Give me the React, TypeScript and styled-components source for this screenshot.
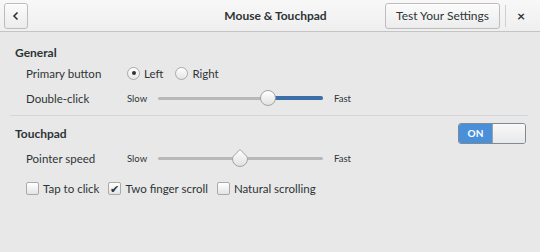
import React from 'react'
import styled, { createGlobalStyle } from 'styled-components'

const GlobalStyle = createGlobalStyle`
  html, body {
    margin: 0;
    padding: 0;
    background: #e8e8e8;
  }
  body {
    font-family: Lato, 'Open Sans', sans-serif;
    color: #2e3436;
  }
`

const Window = styled.div`
  width: 540px;
  height: 252px;
  background: #e8e8e8;
  overflow: hidden;
`

const HeaderBar = styled.div`
  height: 32px;
  display: flex;
  align-items: center;
  padding: 0 4px;
  background: linear-gradient(#f8f8f8, #efefef);
  border-bottom: 1px solid #c4c4c4;
  box-sizing: border-box;
`

const HeaderButton = styled.button`
  height: 26px;
  border: 1px solid #bdbdbd;
  border-radius: 3px;
  background: linear-gradient(#fbfbfb, #ececec);
  font-family: inherit;
  font-size: 12px;
  color: #2e3436;
  padding: 0 10px;
  display: flex;
  align-items: center;
  justify-content: center;
  box-shadow: inset 0 1px #fff;
`

const BackButton = styled(HeaderButton)`
  width: 24px;
  padding: 0;
`

const Title = styled.div`
  flex: 1;
  text-align: center;
  font-weight: 700;
  font-size: 12px;
  padding-left: 138px;
`

const Divider = styled.div`
  width: 1px;
  height: 22px;
  background: #d0d0d0;
  margin-left: 5px;
`

const CloseButton = styled.div`
  width: 30px;
  text-align: center;
  font-size: 14px;
  font-weight: 700;
`

const Body = styled.div`
  padding: 10px 12px 0 15px;
`

const Section = styled.div`
  display: flex;
  flex-direction: column;
`

const SectionHead = styled.div`
  display: flex;
  align-items: center;
  justify-content: space-between;
  height: 20px;
  font-weight: 700;
  font-size: 12px;
`

const Row = styled.div<{ $h: number }>`
  display: flex;
  align-items: center;
  height: ${p => p.$h}px;
  padding-left: 11px;
  font-size: 11.5px;
`

const Label = styled.div`
  width: 101px;
`

const Radio = styled.span<{ $on?: boolean }>`
  width: 11px;
  height: 11px;
  border-radius: 50%;
  border: 1px solid #a9a9a9;
  background: linear-gradient(#ffffff, #e4e4e4);
  display: inline-flex;
  align-items: center;
  justify-content: center;
  margin-right: 4px;
  &::after {
    content: '';
    width: 4px;
    height: 4px;
    border-radius: 50%;
    background: ${p => (p.$on ? '#2e3436' : 'transparent')};
  }
`

const Option = styled.label<{ $gap?: number }>`
  display: flex;
  align-items: center;
  margin-right: ${p => p.$gap ?? 0}px;
`

const SmallText = styled.span<{ $w: number }>`
  font-size: 9.5px;
  width: ${p => p.$w}px;
`

const Track = styled.div`
  position: relative;
  width: 165px;
  height: 3px;
  border-radius: 2px;
  background: #b8b8b8;
  margin-right: 11px;
`

const Fill = styled.div`
  position: absolute;
  top: -0.5px;
  right: 0;
  height: 4px;
  border-radius: 2px;
  background: #3c6fa7;
`

const Knob = styled.div`
  position: absolute;
  top: 50%;
  width: 14px;
  height: 14px;
  margin: -8px 0 0 -8px;
  border-radius: 50%;
  border: 1px solid #a4a4a4;
  background: linear-gradient(#ffffff, #e2e2e2);
`

const MarkKnob = styled.svg`
  position: absolute;
  top: 50%;
  margin: -10px 0 0 -9px;
`

const Separator = styled.div`
  height: 1px;
  background: #d6d6d6;
  margin: 3px 0 7px -5px;
`

const Switch = styled.div`
  display: flex;
  width: 66px;
  height: 19px;
  border: 1px solid #7f8a93;
  border-radius: 3px;
  overflow: hidden;
  margin-right: 2px;
`

const SwitchOn = styled.div`
  width: 33px;
  background: #4a90d9;
  color: #fff;
  font-size: 10px;
  font-weight: 700;
  display: flex;
  align-items: center;
  justify-content: center;
`

const SwitchOff = styled.div`
  flex: 1;
  border-left: 1px solid #9aa3aa;
  background: linear-gradient(#f9f9f9, #e8e8e8);
`

const Check = styled.span`
  width: 11px;
  height: 11px;
  border: 1px solid #a9a9a9;
  border-radius: 2px;
  background: linear-gradient(#ffffff, #e4e4e4);
  display: inline-flex;
  align-items: center;
  justify-content: center;
  margin-right: 4px;
  font-size: 11px;
  line-height: 1;
  color: #2e3436;
`

function Slider({ pos, fill, marked }: { pos: number; fill?: boolean; marked?: boolean }) {
  return (
    <Track>
      {fill && <Fill style={{ left: pos }} />}
      {marked ? (
        <MarkKnob width="18" height="20" viewBox="0 0 18 20" style={{ left: pos }}>
          <defs>
            <linearGradient id="kg" x1="0" y1="0" x2="0" y2="1">
              <stop offset="0" stopColor="#ffffff" />
              <stop offset="1" stopColor="#e0e0e0" />
            </linearGradient>
          </defs>
          <path d="M9 1.5 L15.5 8 Q16.5 9 16.5 11 A7.5 7.5 0 0 1 1.5 11 Q1.5 9 2.5 8 Z" fill="url(#kg)" stroke="#a4a4a4" strokeWidth="1" />
        </MarkKnob>
      ) : (
        <Knob style={{ left: pos }} />
      )}
    </Track>
  )
}

export default function App() {
  return (
    <Window>
      <GlobalStyle />
      <HeaderBar>
        <BackButton>
          <svg width="10" height="10" viewBox="0 0 10 10">
            <path d="M6.5 1.5 L3 5 L6.5 8.5" fill="none" stroke="#2e3436" strokeWidth="1.6" />
          </svg>
        </BackButton>
        <Title>Mouse &amp; Touchpad</Title>
        <HeaderButton>Test Your Settings</HeaderButton>
        <Divider />
        <CloseButton>×</CloseButton>
      </HeaderBar>
      <Body>
        <Section>
          <SectionHead>General</SectionHead>
          <Row $h={22}>
            <Label>Primary button</Label>
            <Option $gap={12}>
              <Radio $on />Left
            </Option>
            <Option>
              <Radio />Right
            </Option>
          </Row>
          <Row $h={28}>
            <Label>Double-click</Label>
            <SmallText $w={31}>Slow</SmallText>
            <Slider pos={110} fill />
            <SmallText $w={30}>Fast</SmallText>
          </Row>
        </Section>
        <Separator />
        <Section>
          <SectionHead>
            Touchpad
            <Switch>
              <SwitchOn>ON</SwitchOn>
              <SwitchOff />
            </Switch>
          </SectionHead>
          <Row $h={30}>
            <Label>Pointer speed</Label>
            <SmallText $w={31}>Slow</SmallText>
            <Slider pos={82} marked />
            <SmallText $w={30}>Fast</SmallText>
          </Row>
          <Row $h={30}>
            <Option $gap={9}>
              <Check />Tap to click
            </Option>
            <Option $gap={9}>
              <Check>✔</Check>Two finger scroll
            </Option>
            <Option>
              <Check />Natural scrolling
            </Option>
          </Row>
        </Section>
      </Body>
    </Window>
  )
}
